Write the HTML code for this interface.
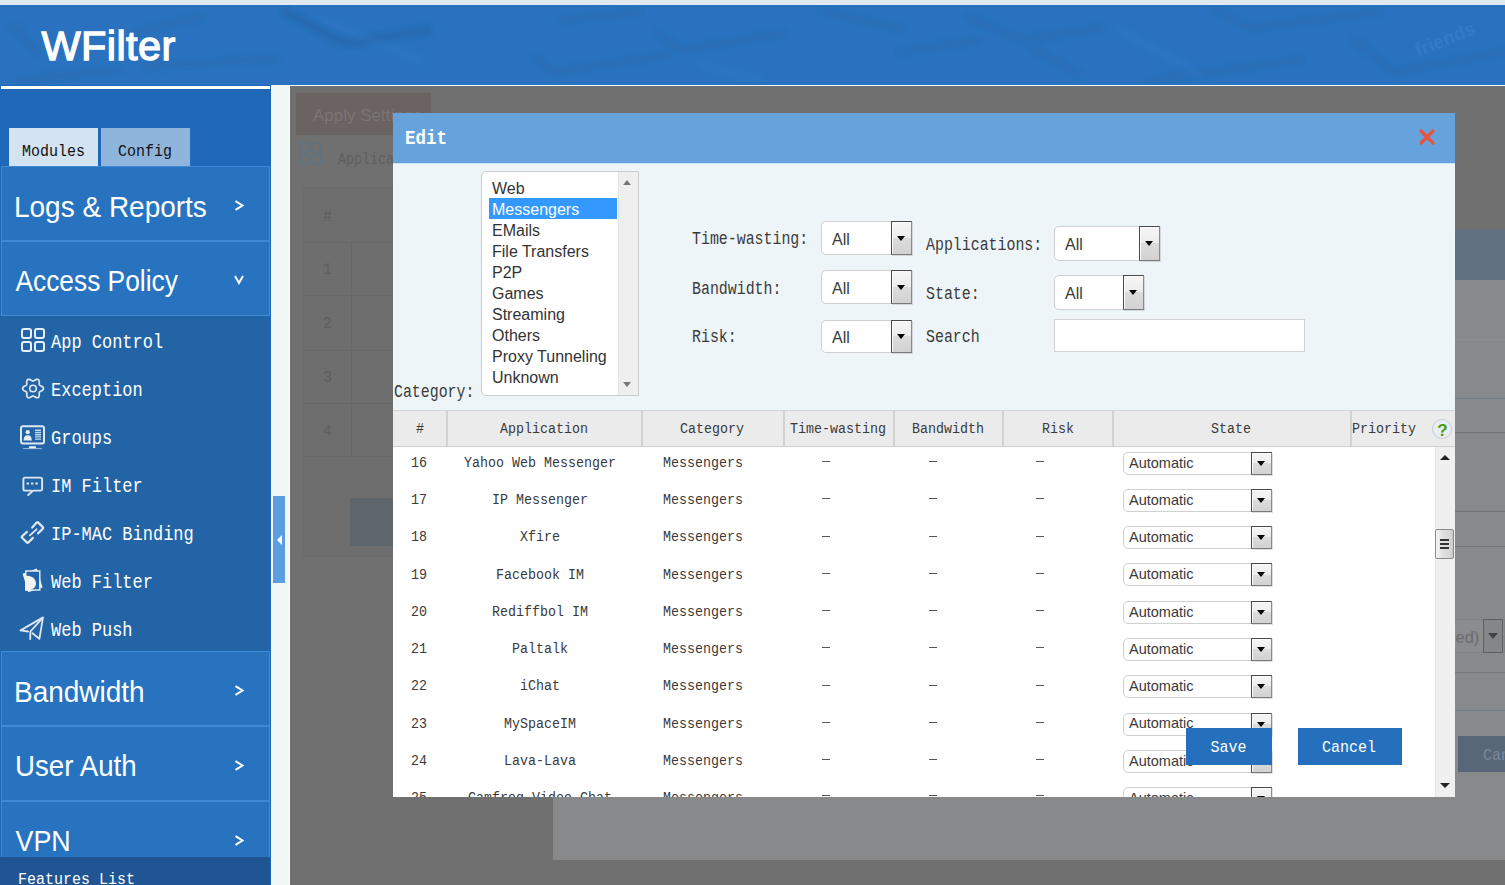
<!DOCTYPE html>
<html><head><meta charset="utf-8"><style>
*{margin:0;padding:0;box-sizing:border-box}
html,body{width:1505px;height:885px;overflow:hidden;background:#6f706f;font-family:"Liberation Sans",sans-serif}
.a{position:absolute}
.tx{left:0;top:0;overflow:visible}
#topstrip{left:0;top:0;width:1505px;height:5px;background:#dfe9f4}
#header{left:0;top:5px;width:1505px;height:80px;background:#2a72bf;overflow:hidden}
#sidebar{left:0;top:85px;width:271px;height:800px;background:#2069b9}
#whiteline{left:1px;top:86px;width:269px;height:3px;background:#fff}
.tab{top:128px;height:38px}
.mi{left:1px;width:269px;height:75px;background:#2773bf;border:1px solid #3f8ad5}
.chev{left:234px;width:10px;height:11px}
#submenu{left:0;top:316px;width:270px;height:335px;background:#2264a6}
#features{left:0;top:857px;width:270px;height:28px;background:#1f5593}
#lightcol{left:271px;top:85px;width:18px;height:800px;background:#f0f7f4}
#lightcol2{left:289px;top:85px;width:1px;height:800px;background:#fbfdfd}
#collapse{left:273px;top:496px;width:12px;height:87px;background:#5d9ee0}
#modal{left:393px;top:113px;width:1062px;height:684px;background:#eef5f9;overflow:hidden}
#mtitle{left:393px;top:113px;width:1062px;height:51px;background:#66a3dc;border-bottom:1px solid #c9e2f6}
.sel{background:#fff;border:1px solid #d0d0d0;border-radius:5px 0 0 5px}
.selb{position:absolute;right:-1px;top:-1px;bottom:-1px;border:1px solid #4a4a4a;border-right-color:#8a8a8a;border-bottom-color:#7a7a7a;background:linear-gradient(#f6f6f6 0%,#ececec 50%,#dcdcdc 50%,#d2d2d2 100%);box-shadow:inset 1px 1px 0 #fafafa,1px 1px 0 rgba(0,0,0,.12)}
.selb i{position:absolute;left:50%;top:50%;margin-left:-4.5px;margin-top:-2.5px;width:0;height:0;border-left:4.5px solid transparent;border-right:4.5px solid transparent;border-top:5px solid #000}
#thead{left:393px;top:410px;width:1062px;height:37px;background:#ebebeb;border-top:1px solid #d3d3d3;border-bottom:1px solid #d0d0d0}
.vd{top:411px;width:2px;height:35px;background:#d2d2d2}
#tbody{left:393px;top:447px;width:1042px;height:350px;background:#fff}
#vscroll{left:1435px;top:447px;width:20px;height:350px;background:#f0f0f0;border-left:1px solid #e6e6e6}
.dash{width:8px;height:1px;background:#555}
.btn{background:#2570bd}
</style></head><body>
<div class="a" id="topstrip"></div><div class="a" id="header"></div>
<svg class="a" style="left:0;top:5px" width="1505" height="80" viewBox="0 5 1505 80"><defs><filter id="bl" x="-10%" y="-50%" width="120%" height="200%"><feGaussianBlur stdDeviation="3.2"/></filter></defs><g filter="url(#bl)" stroke="#1d5a9c" stroke-width="8" stroke-opacity="0.24" fill="none" stroke-linecap="round" stroke-linejoin="round"><path d="M12 25 L39 54"/><path d="M135 33 L203 16"/><path d="M144 67 L278 58"/><path d="M284 12 L353 45 L428 30"/><path d="M285 10 L338 43 L429 29"/><path d="M534 57 L553 72 L668 55"/><path d="M658 33 L682 50 L785 33"/><path d="M821 10 L900 29"/><path d="M968 16 L1021 40 L1101 28"/><path d="M900 52 L980 40"/><path d="M1213 8 L1250 28 L1378 12"/><path d="M1033 48 L1081 76"/><path d="M1354 40 L1394 72 L1505 52"/><path d="M20 80 L120 70"/><path d="M560 20 L640 12"/><path d="M1150 80 L1300 60"/></g><g filter="url(#bl)" stroke="#3a85d0" stroke-width="5" stroke-opacity="0.25" fill="none" stroke-linecap="round"><path d="M320 20 L420 60"/><path d="M700 65 L760 80"/><path d="M1120 30 L1200 75"/></g><text transform="translate(1418,57) rotate(-22)" font-family="Liberation Sans" font-size="19" font-weight="700" fill="#5b9ae0" fill-opacity="0.22">friends</text></svg>
<div class="a" style="left:271px;top:85px;width:1234px;height:1px;background:#f4f8fb"></div>
<svg class="a tx" width="1" height="1"><text transform="translate(41.5,60) scale(1.0,0.99)" font-family="Liberation Sans" font-size="41.5" fill="#fff" stroke="#fff" stroke-width="1.3" letter-spacing="0.4">WFilter</text></svg>
<div class="a" style="left:296px;top:93px;width:135px;height:42px;background:#6b6262"></div>
<svg class="a tx" width="1" height="1"><text transform="translate(313,121)" font-family="Liberation Sans" font-size="17" fill="#7c7474" xml:space="preserve">Apply Settings</text></svg>
<div class="a" style="left:303px;top:187px;width:260px;height:370px;border:1px solid #6a6b6a;background:#6d6e6d"></div>
<div class="a" style="left:304px;top:242px;width:258px;height:1px;background:#676867"></div>
<div class="a" style="left:304px;top:295px;width:258px;height:1px;background:#676867"></div>
<div class="a" style="left:304px;top:350px;width:258px;height:1px;background:#676867"></div>
<div class="a" style="left:304px;top:403px;width:258px;height:1px;background:#676867"></div>
<div class="a" style="left:304px;top:456px;width:258px;height:1px;background:#676867"></div>
<div class="a" style="left:351px;top:242px;width:1px;height:214px;background:#676867"></div>
<svg class="a tx" width="1" height="1"><text transform="translate(323,221) scale(1.0,1.15)" font-family="Liberation Mono" font-size="15" fill="#5f5f5f" xml:space="preserve">#</text></svg>
<svg class="a tx" width="1" height="1"><text transform="translate(323,274) scale(1.0,1.15)" font-family="Liberation Mono" font-size="15" fill="#5f5f5f" xml:space="preserve">1</text></svg>
<svg class="a tx" width="1" height="1"><text transform="translate(323,328) scale(1.0,1.15)" font-family="Liberation Mono" font-size="15" fill="#5f5f5f" xml:space="preserve">2</text></svg>
<svg class="a tx" width="1" height="1"><text transform="translate(323,382) scale(1.0,1.15)" font-family="Liberation Mono" font-size="15" fill="#5f5f5f" xml:space="preserve">3</text></svg>
<svg class="a tx" width="1" height="1"><text transform="translate(323,436) scale(1.0,1.15)" font-family="Liberation Mono" font-size="15" fill="#5f5f5f" xml:space="preserve">4</text></svg>
<div class="a" style="left:350px;top:498px;width:100px;height:48px;background:#5f666b"></div>
<svg class="a" style="left:299px;top:142px" width="24" height="24" viewBox="0 0 24 24" fill="none" stroke="#5d7383" stroke-width="1.6"><rect x="1" y="1" width="9" height="9" rx="2"/><rect x="13" y="1" width="9" height="9" rx="2"/><rect x="1" y="13" width="9" height="9" rx="2"/><rect x="13" y="13" width="9" height="9" rx="2"/></svg>
<svg class="a tx" width="1" height="1"><text transform="translate(338,163.5) scale(1.0,1.2)" font-family="Liberation Mono" font-size="13.33" fill="#5f5f5f" xml:space="preserve">Application Control</text></svg>
<div class="a" style="left:553px;top:229px;width:952px;height:631px;background:#88898b"></div>
<div class="a" style="left:553px;top:229px;width:952px;height:51px;background:#627180"></div>
<div class="a" style="left:553px;top:339px;width:952px;height:1px;background:#8d8e90"></div>
<div class="a" style="left:553px;top:398px;width:952px;height:1px;background:#6d7b89"></div>
<div class="a" style="left:553px;top:432px;width:952px;height:1px;background:#727373"></div>
<div class="a" style="left:553px;top:511px;width:952px;height:1px;background:#737474"></div>
<div class="a" style="left:553px;top:546px;width:952px;height:1px;background:#737474"></div>
<div class="a" style="left:553px;top:672px;width:952px;height:1px;background:#757676"></div>
<div class="a" style="left:553px;top:710px;width:952px;height:1px;background:#6d7b89"></div>
<div class="a" style="left:1350px;top:619px;width:155px;height:34px;border:1px solid #808183;border-radius:5px 0 0 5px;background:#8b8c8e"></div>
<svg class="a tx" width="1" height="1"><text transform="translate(1455.5,643)" font-family="Liberation Sans" font-size="16.5" fill="#6b6c6e" xml:space="preserve">ed)</text></svg>
<div class="a" style="left:1483px;top:619px;width:20px;height:34px;border:1px solid #5f6061;background:#858688"></div>
<div class="a" style="left:1488px;top:633px;width:0;height:0;border-left:5px solid transparent;border-right:5px solid transparent;border-top:6px solid #444"></div>
<div class="a" style="left:1458px;top:736px;width:60px;height:36px;background:#586778"></div>
<svg class="a tx" width="1" height="1"><text transform="translate(1483,760) scale(1.0,1.1)" font-family="Liberation Mono" font-size="15" fill="#7b8896" xml:space="preserve">Cancel</text></svg>
<div class="a" id="sidebar"></div><div class="a" id="whiteline"></div>
<div class="a tab" style="left:9px;width:89px;background:#d4e3f2"></div>
<div class="a tab" style="left:101px;width:89px;background:#90b5dc"></div>
<svg class="a tx" width="1" height="1"><text transform="translate(22,156) scale(1.0,1.1)" font-family="Liberation Mono" font-size="15" fill="#111" xml:space="preserve">Modules</text></svg>
<svg class="a tx" width="1" height="1"><text transform="translate(118,156) scale(1.0,1.1)" font-family="Liberation Mono" font-size="15" fill="#111" xml:space="preserve">Config</text></svg>
<div class="a mi" style="top:166px"></div>
<svg class="a tx" width="1" height="1"><text transform="translate(14,217) scale(1.0,1.05)" font-family="Liberation Sans" font-size="28" fill="#fff" xml:space="preserve">Logs &amp; Reports</text></svg>
<svg class="a chev" style="top:200px" width="10" height="11" viewBox="0 0 10 11"><path d="M1.5 1.2 L8.5 5.5 L1.5 9.8" fill="none" stroke="#fff" stroke-width="2" stroke-linejoin="miter"/></svg>
<div class="a mi" style="top:241px"></div>
<svg class="a tx" width="1" height="1"><text transform="translate(15.5,291) scale(0.94,1.05)" font-family="Liberation Sans" font-size="28" fill="#fff" xml:space="preserve">Access Policy</text></svg>
<svg class="a chev" style="top:274px" width="10" height="10" viewBox="0 0 10 10"><path d="M1 1.5 L5 8.5 L9 1.5" fill="none" stroke="#fff" stroke-width="2"/></svg>
<div class="a" id="submenu"></div>
<svg class="a tx" width="1" height="1"><text transform="translate(51,348) scale(1.0,1.18)" font-family="Liberation Mono" font-size="17" fill="#fff" xml:space="preserve">App Control</text></svg>
<svg class="a tx" width="1" height="1"><text transform="translate(51,396) scale(1.0,1.18)" font-family="Liberation Mono" font-size="17" fill="#fff" xml:space="preserve">Exception</text></svg>
<svg class="a tx" width="1" height="1"><text transform="translate(51,444) scale(1.0,1.18)" font-family="Liberation Mono" font-size="17" fill="#fff" xml:space="preserve">Groups</text></svg>
<svg class="a tx" width="1" height="1"><text transform="translate(51,492) scale(1.0,1.18)" font-family="Liberation Mono" font-size="17" fill="#fff" xml:space="preserve">IM Filter</text></svg>
<svg class="a tx" width="1" height="1"><text transform="translate(51,540) scale(1.0,1.18)" font-family="Liberation Mono" font-size="17" fill="#fff" xml:space="preserve">IP-MAC Binding</text></svg>
<svg class="a tx" width="1" height="1"><text transform="translate(51,588) scale(1.0,1.18)" font-family="Liberation Mono" font-size="17" fill="#fff" xml:space="preserve">Web Filter</text></svg>
<svg class="a tx" width="1" height="1"><text transform="translate(51,636) scale(1.0,1.18)" font-family="Liberation Mono" font-size="17" fill="#fff" xml:space="preserve">Web Push</text></svg>
<svg class="a" style="left:21px;top:328px" width="24" height="24" viewBox="0 0 24 24" fill="none" stroke="#e6eef8" stroke-width="2"><rect x="1" y="1" width="9" height="9" rx="2"/><rect x="14" y="1" width="9" height="9" rx="2"/><rect x="1" y="14" width="9" height="9" rx="2"/><rect x="14" y="14" width="9" height="9" rx="2"/></svg>
<svg class="a" style="left:0;top:0;overflow:visible" width="1" height="1" fill="none" stroke="#dfe8f2"><path d="M43.40,388.50 L43.31,389.04 L43.06,389.56 L42.66,390.03 L42.16,390.45 L41.60,390.80 L41.02,391.11 L40.49,391.37 L40.02,391.63 L39.66,391.89 L39.41,392.20 L39.27,392.57 L39.22,393.02 L39.23,393.55 L39.27,394.15 L39.29,394.79 L39.27,395.46 L39.16,396.10 L38.94,396.68 L38.62,397.16 L38.20,397.51 L37.69,397.70 L37.11,397.74 L36.51,397.63 L35.89,397.41 L35.30,397.10 L34.75,396.75 L34.25,396.42 L33.80,396.14 L33.39,395.96 L33.00,395.90 L32.61,395.96 L32.20,396.14 L31.75,396.42 L31.25,396.75 L30.70,397.10 L30.11,397.41 L29.49,397.63 L28.89,397.74 L28.31,397.70 L27.80,397.51 L27.38,397.16 L27.06,396.68 L26.84,396.10 L26.73,395.46 L26.71,394.79 L26.73,394.15 L26.77,393.55 L26.78,393.02 L26.73,392.57 L26.59,392.20 L26.34,391.89 L25.98,391.63 L25.51,391.37 L24.98,391.11 L24.40,390.80 L23.84,390.45 L23.34,390.03 L22.94,389.56 L22.69,389.04 L22.60,388.50 L22.69,387.96 L22.94,387.44 L23.34,386.97 L23.84,386.55 L24.40,386.20 L24.98,385.89 L25.51,385.63 L25.98,385.37 L26.34,385.11 L26.59,384.80 L26.73,384.43 L26.78,383.98 L26.77,383.45 L26.73,382.85 L26.71,382.21 L26.73,381.54 L26.84,380.90 L27.06,380.32 L27.38,379.84 L27.80,379.49 L28.31,379.30 L28.89,379.26 L29.49,379.37 L30.11,379.59 L30.70,379.90 L31.25,380.25 L31.75,380.58 L32.20,380.86 L32.61,381.04 L33.00,381.10 L33.39,381.04 L33.80,380.86 L34.25,380.58 L34.75,380.25 L35.30,379.90 L35.89,379.59 L36.51,379.37 L37.11,379.26 L37.69,379.30 L38.20,379.49 L38.62,379.84 L38.94,380.32 L39.16,380.90 L39.27,381.54 L39.29,382.21 L39.27,382.85 L39.23,383.45 L39.22,383.98 L39.27,384.43 L39.41,384.80 L39.66,385.11 L40.02,385.37 L40.49,385.63 L41.02,385.89 L41.60,386.20 L42.16,386.55 L42.66,386.97 L43.06,387.44 L43.31,387.96 L43.40,388.50Z" stroke-width="1.7"/><circle cx="33" cy="388.5" r="3.3" stroke-width="1.6"/><rect x="21" y="426.3" width="23" height="17.2" rx="2" stroke-width="2"/><circle cx="27.7" cy="432.2" r="2.1" fill="#e6eef8" stroke="none"/><path d="M23.6 440.6 C23.8 436.5 25.5 435.3 27.7 435.3 C29.9 435.3 31.6 436.5 31.8 440.6 Z" fill="#e6eef8" stroke="none"/><path d="M35 430.3h6M35 432.5h6M35 434.7h6M35 436.9h6M35 439.1h6" stroke="#c6d5e6" stroke-width="1.4"/><path d="M29.5 446.2h6l1 2.6h-8z" fill="#f0f4f8" stroke="none"/><path d="M23 448.6h19" stroke="#9fbbd8" stroke-width="1"/><path d="M25 477.6h15.5a1.6 1.6 0 0 1 1.6 1.6v9.8a1.6 1.6 0 0 1 -1.6 1.6h-7.2l-5.2 4.4M31 490.6h-6a1.6 1.6 0 0 1 -1.6 -1.6v-9.8a1.6 1.6 0 0 1 1.6 -1.6" stroke-width="1.9" stroke-linecap="round"/><path d="M26.6 483.6h2.4M31 483.6h2.4M35.4 483.6h2.4" stroke-width="2"/><path d="M32.2 527.6 L36.7 522.6 Q37.5 521.8 38.3 522.6 L42.8 527.1 Q43.6 527.9 42.8 528.7 L38 533.4" stroke-width="2.2" stroke-linecap="round" stroke-linejoin="round"/><path d="M32.9 537.9 L28.4 542.4 Q27.6 543.2 26.8 542.4 L22.1 537.8 Q21.3 537 22.1 536.2 L26.9 531.9" stroke-width="2.2" stroke-linecap="round" stroke-linejoin="round"/><path d="M29.8 535.4 L36.6 529.3" stroke-width="1.8" stroke-linecap="round"/><polygon points="22.6,573.8 36.8,568.4 42.6,587.6 28.2,592.2" fill="#eef2f6" stroke="none"/><rect x="25.8" y="571" width="14" height="19" fill="#2264a7" stroke="#e9eef4" stroke-width="1.4"/><path d="M25.3 576 C31.5 575 36 579 36 583.5 C36 587.5 32.5 590.5 25.3 590.5 Z" fill="#f2f2f2" stroke="none"/><path d="M20.6 630.4 L43 617.4 L39.4 638.8 L32.5 633.3" stroke-width="1.8" stroke-linejoin="round" stroke-linecap="round"/><path d="M20.6 630.4 L28 631.5" stroke-width="1.8" stroke-linecap="round"/><path d="M42 618.6 L30.4 631.5 L30.2 639" stroke-width="1.8" stroke-linejoin="round" stroke-linecap="round"/></svg>
<div class="a mi" style="top:651px;height:75px"></div>
<svg class="a tx" width="1" height="1"><text transform="translate(14,702) scale(1.0,1.05)" font-family="Liberation Sans" font-size="28" fill="#fff" xml:space="preserve">Bandwidth</text></svg>
<svg class="a chev" style="top:685px" width="10" height="11" viewBox="0 0 10 11"><path d="M1.5 1.2 L8.5 5.5 L1.5 9.8" fill="none" stroke="#fff" stroke-width="2" stroke-linejoin="miter"/></svg>
<div class="a mi" style="top:726px;height:75px"></div>
<svg class="a tx" width="1" height="1"><text transform="translate(15,776) scale(0.99,1.05)" font-family="Liberation Sans" font-size="28" fill="#fff" xml:space="preserve">User Auth</text></svg>
<svg class="a chev" style="top:760px" width="10" height="11" viewBox="0 0 10 11"><path d="M1.5 1.2 L8.5 5.5 L1.5 9.8" fill="none" stroke="#fff" stroke-width="2" stroke-linejoin="miter"/></svg>
<div class="a mi" style="top:801px;height:90px"></div>
<svg class="a tx" width="1" height="1"><text transform="translate(15.5,851) scale(0.96,1.05)" font-family="Liberation Sans" font-size="28" fill="#fff" xml:space="preserve">VPN</text></svg>
<svg class="a chev" style="top:835px" width="10" height="11" viewBox="0 0 10 11"><path d="M1.5 1.2 L8.5 5.5 L1.5 9.8" fill="none" stroke="#fff" stroke-width="2" stroke-linejoin="miter"/></svg>
<div class="a" id="features"></div>
<svg class="a tx" width="1" height="1"><text transform="translate(18,884) scale(1.0,1.1)" font-family="Liberation Mono" font-size="15" fill="#fff" xml:space="preserve">Features List</text></svg>
<div class="a" id="lightcol"></div><div class="a" id="lightcol2"></div><div class="a" id="collapse"></div>
<div class="a" style="left:277px;top:535px;width:0;height:0;border-top:5px solid transparent;border-bottom:5px solid transparent;border-right:5px solid #fff"></div>
<div class="a" id="modal"></div><div class="a" id="mtitle"></div>
<svg class="a tx" width="1" height="1"><text transform="translate(405,144) scale(1.0,1.18)" font-family="Liberation Mono" font-size="17.5" fill="#fff" font-weight="700" xml:space="preserve">Edit</text></svg>
<svg class="a" style="left:1419px;top:129px" width="16" height="16" viewBox="0 0 16 16"><path d="M2 2L14 14M14 2L2 14" stroke="#e9533d" stroke-width="3.2" stroke-linecap="round"/></svg>
<div class="a" style="left:481px;top:171px;width:158px;height:225px;background:#fff;border:1px solid #cdcdcd;border-radius:5px 0 0 5px"></div>
<div class="a" style="left:618px;top:172px;width:20px;height:223px;background:#efefef;border-left:1px solid #e2e2e2"></div>
<div class="a" style="left:623px;top:180px;width:0;height:0;border-left:4.5px solid transparent;border-right:4.5px solid transparent;border-bottom:5px solid #777"></div>
<div class="a" style="left:623px;top:382px;width:0;height:0;border-left:4.5px solid transparent;border-right:4.5px solid transparent;border-top:5px solid #777"></div>
<div class="a" style="left:489px;top:198px;width:128px;height:21px;background:#3399ff"></div>
<svg class="a tx" width="1" height="1"><text transform="translate(492,194)" font-family="Liberation Sans" font-size="16" fill="#333" xml:space="preserve">Web</text></svg>
<svg class="a tx" width="1" height="1"><text transform="translate(492,215)" font-family="Liberation Sans" font-size="16" fill="#fff" xml:space="preserve">Messengers</text></svg>
<svg class="a tx" width="1" height="1"><text transform="translate(492,236)" font-family="Liberation Sans" font-size="16" fill="#333" xml:space="preserve">EMails</text></svg>
<svg class="a tx" width="1" height="1"><text transform="translate(492,257)" font-family="Liberation Sans" font-size="16" fill="#333" xml:space="preserve">File Transfers</text></svg>
<svg class="a tx" width="1" height="1"><text transform="translate(492,278)" font-family="Liberation Sans" font-size="16" fill="#333" xml:space="preserve">P2P</text></svg>
<svg class="a tx" width="1" height="1"><text transform="translate(492,299)" font-family="Liberation Sans" font-size="16" fill="#333" xml:space="preserve">Games</text></svg>
<svg class="a tx" width="1" height="1"><text transform="translate(492,320)" font-family="Liberation Sans" font-size="16" fill="#333" xml:space="preserve">Streaming</text></svg>
<svg class="a tx" width="1" height="1"><text transform="translate(492,341)" font-family="Liberation Sans" font-size="16" fill="#333" xml:space="preserve">Others</text></svg>
<svg class="a tx" width="1" height="1"><text transform="translate(492,362)" font-family="Liberation Sans" font-size="16" fill="#333" xml:space="preserve">Proxy Tunneling</text></svg>
<svg class="a tx" width="1" height="1"><text transform="translate(492,383)" font-family="Liberation Sans" font-size="16" fill="#333" xml:space="preserve">Unknown</text></svg>
<svg class="a tx" width="1" height="1"><text transform="translate(394,397) scale(1.0,1.2)" font-family="Liberation Mono" font-size="14.9" fill="#3a3a3a" xml:space="preserve">Category:</text></svg>
<svg class="a tx" width="1" height="1"><text transform="translate(692,244) scale(1.0,1.28)" font-family="Liberation Mono" font-size="14.9" fill="#3a3a3a" xml:space="preserve">Time-wasting:</text></svg>
<svg class="a tx" width="1" height="1"><text transform="translate(692,294) scale(1.0,1.28)" font-family="Liberation Mono" font-size="14.9" fill="#3a3a3a" xml:space="preserve">Bandwidth:</text></svg>
<svg class="a tx" width="1" height="1"><text transform="translate(692,342) scale(1.0,1.28)" font-family="Liberation Mono" font-size="14.9" fill="#3a3a3a" xml:space="preserve">Risk:</text></svg>
<svg class="a tx" width="1" height="1"><text transform="translate(926,250) scale(1.0,1.28)" font-family="Liberation Mono" font-size="14.9" fill="#3a3a3a" xml:space="preserve">Applications:</text></svg>
<svg class="a tx" width="1" height="1"><text transform="translate(926,299) scale(1.0,1.28)" font-family="Liberation Mono" font-size="14.9" fill="#3a3a3a" xml:space="preserve">State:</text></svg>
<svg class="a tx" width="1" height="1"><text transform="translate(926,342) scale(1.0,1.28)" font-family="Liberation Mono" font-size="14.9" fill="#3a3a3a" xml:space="preserve">Search</text></svg>
<div class="a sel" style="left:821px;top:221px;width:91px;height:34px"><div class="selb" style="width:21px"><i></i></div></div><svg class="a tx" width="1" height="1"><text transform="translate(832,245)" font-family="Liberation Sans" font-size="16" fill="#3a3a3a" xml:space="preserve">All</text></svg>
<div class="a sel" style="left:821px;top:270px;width:91px;height:34px"><div class="selb" style="width:21px"><i></i></div></div><svg class="a tx" width="1" height="1"><text transform="translate(832,294)" font-family="Liberation Sans" font-size="16" fill="#3a3a3a" xml:space="preserve">All</text></svg>
<div class="a sel" style="left:821px;top:320px;width:91px;height:33px"><div class="selb" style="width:21px"><i></i></div></div><svg class="a tx" width="1" height="1"><text transform="translate(832,343)" font-family="Liberation Sans" font-size="16" fill="#3a3a3a" xml:space="preserve">All</text></svg>
<div class="a sel" style="left:1054px;top:226px;width:106px;height:35px"><div class="selb" style="width:21px"><i></i></div></div><svg class="a tx" width="1" height="1"><text transform="translate(1065,250)" font-family="Liberation Sans" font-size="16" fill="#3a3a3a" xml:space="preserve">All</text></svg>
<div class="a sel" style="left:1054px;top:275px;width:90px;height:35px"><div class="selb" style="width:21px"><i></i></div></div><svg class="a tx" width="1" height="1"><text transform="translate(1065,299)" font-family="Liberation Sans" font-size="16" fill="#3a3a3a" xml:space="preserve">All</text></svg>
<div class="a" style="left:1054px;top:319px;width:251px;height:33px;background:#fff;border:1px solid #d2d2d2"></div>
<div class="a" id="thead"></div>
<div class="a vd" style="left:446px"></div>
<div class="a vd" style="left:641px"></div>
<div class="a vd" style="left:783px"></div>
<div class="a vd" style="left:893px"></div>
<div class="a vd" style="left:1002px"></div>
<div class="a vd" style="left:1112px"></div>
<div class="a vd" style="left:1350px"></div>
<svg class="a tx" width="1" height="1"><text transform="translate(420,433) scale(1.0,1.15)" font-family="Liberation Mono" font-size="13.33" fill="#3a3a3a" text-anchor="middle" xml:space="preserve">#</text></svg>
<svg class="a tx" width="1" height="1"><text transform="translate(544,433) scale(1.0,1.15)" font-family="Liberation Mono" font-size="13.33" fill="#3a3a3a" text-anchor="middle" xml:space="preserve">Application</text></svg>
<svg class="a tx" width="1" height="1"><text transform="translate(712,433) scale(1.0,1.15)" font-family="Liberation Mono" font-size="13.33" fill="#3a3a3a" text-anchor="middle" xml:space="preserve">Category</text></svg>
<svg class="a tx" width="1" height="1"><text transform="translate(838,433) scale(1.0,1.15)" font-family="Liberation Mono" font-size="13.33" fill="#3a3a3a" text-anchor="middle" xml:space="preserve">Time-wasting</text></svg>
<svg class="a tx" width="1" height="1"><text transform="translate(948,433) scale(1.0,1.15)" font-family="Liberation Mono" font-size="13.33" fill="#3a3a3a" text-anchor="middle" xml:space="preserve">Bandwidth</text></svg>
<svg class="a tx" width="1" height="1"><text transform="translate(1058,433) scale(1.0,1.15)" font-family="Liberation Mono" font-size="13.33" fill="#3a3a3a" text-anchor="middle" xml:space="preserve">Risk</text></svg>
<svg class="a tx" width="1" height="1"><text transform="translate(1231,433) scale(1.0,1.15)" font-family="Liberation Mono" font-size="13.33" fill="#3a3a3a" text-anchor="middle" xml:space="preserve">State</text></svg>
<svg class="a tx" width="1" height="1"><text transform="translate(1352,433) scale(1.0,1.15)" font-family="Liberation Mono" font-size="13.33" fill="#3a3a3a" xml:space="preserve">Priority</text></svg>
<div class="a" style="left:1432px;top:419px;width:20px;height:20px;border-radius:50%;background:#e8edf4;border:1px solid #c9cdd2"></div>
<svg class="a tx" width="1" height="1"><text transform="translate(1442.5,435.5)" font-family="Liberation Sans" font-size="17" fill="#4a9a10" font-weight="700" text-anchor="middle" xml:space="preserve">?</text></svg>
<div class="a" id="tbody"></div>
<svg class="a tx" width="1" height="1"><text transform="translate(419,467) scale(1.0,1.1)" font-family="Liberation Mono" font-size="13.33" fill="#3a3a3a" text-anchor="middle" xml:space="preserve">16</text></svg>
<svg class="a tx" width="1" height="1"><text transform="translate(540,467) scale(1.0,1.1)" font-family="Liberation Mono" font-size="13.33" fill="#3a3a3a" text-anchor="middle" xml:space="preserve">Yahoo Web Messenger</text></svg>
<svg class="a tx" width="1" height="1"><text transform="translate(703,467) scale(1.0,1.1)" font-family="Liberation Mono" font-size="13.33" fill="#3a3a3a" text-anchor="middle" xml:space="preserve">Messengers</text></svg>
<div class="a dash" style="left:822px;top:461px"></div>
<div class="a dash" style="left:929px;top:461px"></div>
<div class="a dash" style="left:1036px;top:461px"></div>
<div class="a sel" style="left:1123px;top:452px;width:149px;height:23px"><div class="selb" style="width:21px"><i></i></div></div><svg class="a tx" width="1" height="1"><text transform="translate(1129,468)" font-family="Liberation Sans" font-size="14.5" fill="#3a3a3a" xml:space="preserve">Automatic</text></svg>
<svg class="a tx" width="1" height="1"><text transform="translate(419,504) scale(1.0,1.1)" font-family="Liberation Mono" font-size="13.33" fill="#3a3a3a" text-anchor="middle" xml:space="preserve">17</text></svg>
<svg class="a tx" width="1" height="1"><text transform="translate(540,504) scale(1.0,1.1)" font-family="Liberation Mono" font-size="13.33" fill="#3a3a3a" text-anchor="middle" xml:space="preserve">IP Messenger</text></svg>
<svg class="a tx" width="1" height="1"><text transform="translate(703,504) scale(1.0,1.1)" font-family="Liberation Mono" font-size="13.33" fill="#3a3a3a" text-anchor="middle" xml:space="preserve">Messengers</text></svg>
<div class="a dash" style="left:822px;top:498px"></div>
<div class="a dash" style="left:929px;top:498px"></div>
<div class="a dash" style="left:1036px;top:498px"></div>
<div class="a sel" style="left:1123px;top:489px;width:149px;height:23px"><div class="selb" style="width:21px"><i></i></div></div><svg class="a tx" width="1" height="1"><text transform="translate(1129,505)" font-family="Liberation Sans" font-size="14.5" fill="#3a3a3a" xml:space="preserve">Automatic</text></svg>
<svg class="a tx" width="1" height="1"><text transform="translate(419,541) scale(1.0,1.1)" font-family="Liberation Mono" font-size="13.33" fill="#3a3a3a" text-anchor="middle" xml:space="preserve">18</text></svg>
<svg class="a tx" width="1" height="1"><text transform="translate(540,541) scale(1.0,1.1)" font-family="Liberation Mono" font-size="13.33" fill="#3a3a3a" text-anchor="middle" xml:space="preserve">Xfire</text></svg>
<svg class="a tx" width="1" height="1"><text transform="translate(703,541) scale(1.0,1.1)" font-family="Liberation Mono" font-size="13.33" fill="#3a3a3a" text-anchor="middle" xml:space="preserve">Messengers</text></svg>
<div class="a dash" style="left:822px;top:536px"></div>
<div class="a dash" style="left:929px;top:536px"></div>
<div class="a dash" style="left:1036px;top:536px"></div>
<div class="a sel" style="left:1123px;top:526px;width:149px;height:23px"><div class="selb" style="width:21px"><i></i></div></div><svg class="a tx" width="1" height="1"><text transform="translate(1129,542)" font-family="Liberation Sans" font-size="14.5" fill="#3a3a3a" xml:space="preserve">Automatic</text></svg>
<svg class="a tx" width="1" height="1"><text transform="translate(419,579) scale(1.0,1.1)" font-family="Liberation Mono" font-size="13.33" fill="#3a3a3a" text-anchor="middle" xml:space="preserve">19</text></svg>
<svg class="a tx" width="1" height="1"><text transform="translate(540,579) scale(1.0,1.1)" font-family="Liberation Mono" font-size="13.33" fill="#3a3a3a" text-anchor="middle" xml:space="preserve">Facebook IM</text></svg>
<svg class="a tx" width="1" height="1"><text transform="translate(703,579) scale(1.0,1.1)" font-family="Liberation Mono" font-size="13.33" fill="#3a3a3a" text-anchor="middle" xml:space="preserve">Messengers</text></svg>
<div class="a dash" style="left:822px;top:573px"></div>
<div class="a dash" style="left:929px;top:573px"></div>
<div class="a dash" style="left:1036px;top:573px"></div>
<div class="a sel" style="left:1123px;top:563px;width:149px;height:23px"><div class="selb" style="width:21px"><i></i></div></div><svg class="a tx" width="1" height="1"><text transform="translate(1129,579)" font-family="Liberation Sans" font-size="14.5" fill="#3a3a3a" xml:space="preserve">Automatic</text></svg>
<svg class="a tx" width="1" height="1"><text transform="translate(419,616) scale(1.0,1.1)" font-family="Liberation Mono" font-size="13.33" fill="#3a3a3a" text-anchor="middle" xml:space="preserve">20</text></svg>
<svg class="a tx" width="1" height="1"><text transform="translate(540,616) scale(1.0,1.1)" font-family="Liberation Mono" font-size="13.33" fill="#3a3a3a" text-anchor="middle" xml:space="preserve">Rediffbol IM</text></svg>
<svg class="a tx" width="1" height="1"><text transform="translate(703,616) scale(1.0,1.1)" font-family="Liberation Mono" font-size="13.33" fill="#3a3a3a" text-anchor="middle" xml:space="preserve">Messengers</text></svg>
<div class="a dash" style="left:822px;top:610px"></div>
<div class="a dash" style="left:929px;top:610px"></div>
<div class="a dash" style="left:1036px;top:610px"></div>
<div class="a sel" style="left:1123px;top:601px;width:149px;height:23px"><div class="selb" style="width:21px"><i></i></div></div><svg class="a tx" width="1" height="1"><text transform="translate(1129,617)" font-family="Liberation Sans" font-size="14.5" fill="#3a3a3a" xml:space="preserve">Automatic</text></svg>
<svg class="a tx" width="1" height="1"><text transform="translate(419,653) scale(1.0,1.1)" font-family="Liberation Mono" font-size="13.33" fill="#3a3a3a" text-anchor="middle" xml:space="preserve">21</text></svg>
<svg class="a tx" width="1" height="1"><text transform="translate(540,653) scale(1.0,1.1)" font-family="Liberation Mono" font-size="13.33" fill="#3a3a3a" text-anchor="middle" xml:space="preserve">Paltalk</text></svg>
<svg class="a tx" width="1" height="1"><text transform="translate(703,653) scale(1.0,1.1)" font-family="Liberation Mono" font-size="13.33" fill="#3a3a3a" text-anchor="middle" xml:space="preserve">Messengers</text></svg>
<div class="a dash" style="left:822px;top:647px"></div>
<div class="a dash" style="left:929px;top:647px"></div>
<div class="a dash" style="left:1036px;top:647px"></div>
<div class="a sel" style="left:1123px;top:638px;width:149px;height:23px"><div class="selb" style="width:21px"><i></i></div></div><svg class="a tx" width="1" height="1"><text transform="translate(1129,654)" font-family="Liberation Sans" font-size="14.5" fill="#3a3a3a" xml:space="preserve">Automatic</text></svg>
<svg class="a tx" width="1" height="1"><text transform="translate(419,690) scale(1.0,1.1)" font-family="Liberation Mono" font-size="13.33" fill="#3a3a3a" text-anchor="middle" xml:space="preserve">22</text></svg>
<svg class="a tx" width="1" height="1"><text transform="translate(540,690) scale(1.0,1.1)" font-family="Liberation Mono" font-size="13.33" fill="#3a3a3a" text-anchor="middle" xml:space="preserve">iChat</text></svg>
<svg class="a tx" width="1" height="1"><text transform="translate(703,690) scale(1.0,1.1)" font-family="Liberation Mono" font-size="13.33" fill="#3a3a3a" text-anchor="middle" xml:space="preserve">Messengers</text></svg>
<div class="a dash" style="left:822px;top:685px"></div>
<div class="a dash" style="left:929px;top:685px"></div>
<div class="a dash" style="left:1036px;top:685px"></div>
<div class="a sel" style="left:1123px;top:675px;width:149px;height:23px"><div class="selb" style="width:21px"><i></i></div></div><svg class="a tx" width="1" height="1"><text transform="translate(1129,691)" font-family="Liberation Sans" font-size="14.5" fill="#3a3a3a" xml:space="preserve">Automatic</text></svg>
<svg class="a tx" width="1" height="1"><text transform="translate(419,728) scale(1.0,1.1)" font-family="Liberation Mono" font-size="13.33" fill="#3a3a3a" text-anchor="middle" xml:space="preserve">23</text></svg>
<svg class="a tx" width="1" height="1"><text transform="translate(540,728) scale(1.0,1.1)" font-family="Liberation Mono" font-size="13.33" fill="#3a3a3a" text-anchor="middle" xml:space="preserve">MySpaceIM</text></svg>
<svg class="a tx" width="1" height="1"><text transform="translate(703,728) scale(1.0,1.1)" font-family="Liberation Mono" font-size="13.33" fill="#3a3a3a" text-anchor="middle" xml:space="preserve">Messengers</text></svg>
<div class="a dash" style="left:822px;top:722px"></div>
<div class="a dash" style="left:929px;top:722px"></div>
<div class="a dash" style="left:1036px;top:722px"></div>
<div class="a sel" style="left:1123px;top:713px;width:149px;height:23px"><div class="selb" style="width:21px"><i></i></div></div><svg class="a tx" width="1" height="1"><text transform="translate(1129,728)" font-family="Liberation Sans" font-size="14.5" fill="#3a3a3a" xml:space="preserve">Automatic</text></svg>
<svg class="a tx" width="1" height="1"><text transform="translate(419,765) scale(1.0,1.1)" font-family="Liberation Mono" font-size="13.33" fill="#3a3a3a" text-anchor="middle" xml:space="preserve">24</text></svg>
<svg class="a tx" width="1" height="1"><text transform="translate(540,765) scale(1.0,1.1)" font-family="Liberation Mono" font-size="13.33" fill="#3a3a3a" text-anchor="middle" xml:space="preserve">Lava-Lava</text></svg>
<svg class="a tx" width="1" height="1"><text transform="translate(703,765) scale(1.0,1.1)" font-family="Liberation Mono" font-size="13.33" fill="#3a3a3a" text-anchor="middle" xml:space="preserve">Messengers</text></svg>
<div class="a dash" style="left:822px;top:759px"></div>
<div class="a dash" style="left:929px;top:759px"></div>
<div class="a dash" style="left:1036px;top:759px"></div>
<div class="a sel" style="left:1123px;top:750px;width:149px;height:23px"><div class="selb" style="width:21px"><i></i></div></div><svg class="a tx" width="1" height="1"><text transform="translate(1129,766)" font-family="Liberation Sans" font-size="14.5" fill="#3a3a3a" xml:space="preserve">Automatic</text></svg>
<svg class="a tx" width="1" height="1"><text transform="translate(419,802) scale(1.0,1.1)" font-family="Liberation Mono" font-size="13.33" fill="#3a3a3a" text-anchor="middle" xml:space="preserve">25</text></svg>
<svg class="a tx" width="1" height="1"><text transform="translate(540,802) scale(1.0,1.1)" font-family="Liberation Mono" font-size="13.33" fill="#3a3a3a" text-anchor="middle" xml:space="preserve">Camfrog Video Chat</text></svg>
<svg class="a tx" width="1" height="1"><text transform="translate(703,802) scale(1.0,1.1)" font-family="Liberation Mono" font-size="13.33" fill="#3a3a3a" text-anchor="middle" xml:space="preserve">Messengers</text></svg>
<div class="a dash" style="left:822px;top:795px"></div>
<div class="a dash" style="left:929px;top:795px"></div>
<div class="a dash" style="left:1036px;top:795px"></div>
<div class="a sel" style="left:1123px;top:787px;width:149px;height:23px"><div class="selb" style="width:21px"><i></i></div></div><svg class="a tx" width="1" height="1"><text transform="translate(1129,803)" font-family="Liberation Sans" font-size="14.5" fill="#3a3a3a" xml:space="preserve">Automatic</text></svg>
<div class="a" style="left:393px;top:797px;width:160px;height:88px;background:#6f706f"></div>
<div class="a" style="left:553px;top:797px;width:952px;height:63px;background:#88898b"></div>
<div class="a" style="left:553px;top:860px;width:952px;height:25px;background:#6f706f"></div>
<div class="a" id="vscroll"></div>
<div class="a" style="left:1440px;top:455px;width:0;height:0;border-left:5px solid transparent;border-right:5px solid transparent;border-bottom:5px solid #222"></div>
<div class="a" style="left:1440px;top:783px;width:0;height:0;border-left:5px solid transparent;border-right:5px solid transparent;border-top:5px solid #222"></div>
<div class="a" style="left:1435px;top:529px;width:19px;height:30px;border:1px solid #8a8a8a;border-radius:2px;background:linear-gradient(90deg,#f4f4f4,#e0e0e0 40%,#d8d8d8 80%,#c8c8c8)"></div>
<div class="a" style="left:1440px;top:539px;width:9px;height:1.5px;background:#333"></div>
<div class="a" style="left:1440px;top:543px;width:9px;height:1.5px;background:#333"></div>
<div class="a" style="left:1440px;top:547px;width:9px;height:1.5px;background:#333"></div>
<div class="a btn" style="left:1186px;top:728px;width:86px;height:37px"></div>
<svg class="a tx" width="1" height="1"><text transform="translate(1228.5,752) scale(1.0,1.1)" font-family="Liberation Mono" font-size="15" fill="#fff" text-anchor="middle" xml:space="preserve">Save</text></svg>
<div class="a btn" style="left:1298px;top:728px;width:104px;height:37px"></div>
<svg class="a tx" width="1" height="1"><text transform="translate(1349,752) scale(1.0,1.1)" font-family="Liberation Mono" font-size="15" fill="#fff" text-anchor="middle" xml:space="preserve">Cancel</text></svg>
</body></html>
